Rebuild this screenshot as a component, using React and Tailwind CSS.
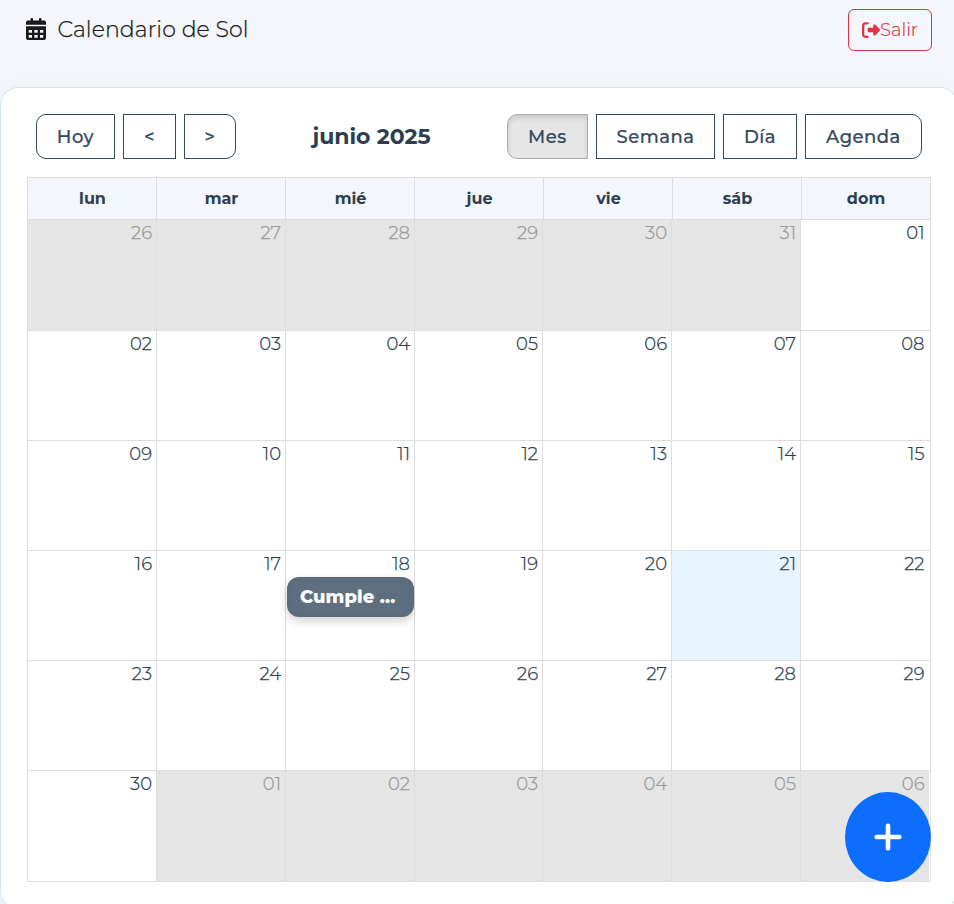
import React from "react";
import { FaRightFromBracket } from "react-icons/fa6";

const days = ["lun", "mar", "mié", "jue", "vie", "sáb", "dom"];

const weeks = [
  ["26", "27", "28", "29", "30", "31", "01"],
  ["02", "03", "04", "05", "06", "07", "08"],
  ["09", "10", "11", "12", "13", "14", "15"],
  ["16", "17", "18", "19", "20", "21", "22"],
  ["23", "24", "25", "26", "27", "28", "29"],
  ["30", "01", "02", "03", "04", "05", "06"],
];

const isOutside = (w, d) => (w === 0 && d < 6) || (w === 5 && d > 0);
const isToday = (w, d) => w === 3 && d === 5;

function CalendarIcon() {
  return (
    <svg className="h-[22px] w-5 shrink-0" viewBox="0 0 20 22" fill="currentColor">
      <path d="M4.6 1a1.2 1.2 0 0 1 2.4 0v1.6h6V1a1.2 1.2 0 0 1 2.4 0v1.6H18a2 2 0 0 1 2 2v2.2H0V4.6a2 2 0 0 1 2-2h2.6z" />
      <path
        fillRule="evenodd"
        d="M0 8.3h20V20a2 2 0 0 1-2 2H2a2 2 0 0 1-2-2zM2.7 11.9v2.9H6v-2.9zM8.3 11.9v2.9h3.4v-2.9zM14 11.9v2.9h3.3v-2.9zM2.7 16.9v2.8H6v-2.8zM8.3 16.9v2.8h3.4v-2.8zM14 16.9v2.8h3.3v-2.8z"
      />
    </svg>
  );
}

function ToolButton({ className, children }) {
  return (
    <button
      className={
        "flex h-[45px] items-center justify-center border pt-px text-[18px] font-medium tracking-[0.5px] text-[#34495e] [-webkit-text-stroke:0.2px] " +
        className
      }
    >
      {children}
    </button>
  );
}

function Cell({ week, day, label }) {
  const outside = isOutside(week, day);
  const bg = outside ? "bg-[#e5e5e5]" : isToday(week, day) ? "bg-[#e8f5ff]" : "bg-white";
  return (
    <div
      className={
        "min-w-0 border-[#dddddd] " +
        (day < 6 ? "border-r " : outside ? "mr-px " : "") +
        (week < 5 ? "border-b " : "") +
        bg
      }
    >
      <div
        className={
          "h-[26px] text-right text-[18px] leading-[26px] font-light [-webkit-text-stroke:0.25px] " +
          (day === 6 ? (outside ? "pr-[4.5px] " : "pr-[5.5px] ") : "pr-1 ") +
          (outside ? "text-[#999999]" : "text-[#2c3e50]")
        }
      >
        {label}
      </div>
      {week === 3 && day === 2 && (
        <div className="ml-px flex h-10 w-[127px] items-center rounded-xl bg-[#5f6f80] pl-[13px] text-[18px] font-extrabold tracking-[0.1px] text-white shadow-[0_4px_10px_rgba(0,0,0,0.18),inset_0_0_8px_rgba(52,73,94,0.2)]">
          Cumple ...
        </div>
      )}
    </div>
  );
}

export default function App() {
  return (
    <div className="relative flex h-[904px] w-[954px] flex-col overflow-hidden bg-[#f4f6fb] font-[Montserrat,Inter,sans-serif]">
      <header className="flex h-[87px] shrink-0 items-start justify-between pt-[9px] pr-[22px] pl-[26px]">
        <div className="flex h-10 items-center text-[#1a1a1a]">
          <CalendarIcon />
          <h1 className="ml-[11.5px] text-[22px] font-light tracking-[0.1px] whitespace-nowrap [-webkit-text-stroke:0.25px]">
            Calendario de Sol
          </h1>
        </div>
        <button className="flex h-[42px] w-[84px] items-center justify-center rounded-md border border-[#dc3545] text-[18px] font-light text-[#dc3545] [-webkit-text-stroke:0.2px]">
          <FaRightFromBracket className="h-[18px] w-[18px] shrink-0" />
          Salir
        </button>
      </header>

      <main className="h-[822px] w-[958px] shrink-0 rounded-[18px] border border-[#cfe6f3] bg-white pt-[26px] pl-[26px] shadow-[0_4px_24px_rgba(0,0,0,0.04)]">
        <div className="flex w-[904px] items-center justify-between pr-[9px] pl-[9px]">
          <div className="flex gap-2">
            <ToolButton className="w-[79px] rounded-l-[10px] border-[#34495e]">Hoy</ToolButton>
            <ToolButton className="w-[53px] border-[#34495e]">&lt;</ToolButton>
            <ToolButton className="w-[52px] rounded-r-[10px] border-[#34495e]">&gt;</ToolButton>
          </div>
          <h2 className="text-[22px] font-bold whitespace-nowrap text-[#2c3e50]">junio 2025</h2>
          <div className="flex gap-2">
            <ToolButton className="w-[81px] rounded-l-[10px] border-[#adadad] bg-[#e6e6e6] shadow-[inset_0_3px_5px_rgba(0,0,0,0.125)]">
              Mes
            </ToolButton>
            <ToolButton className="w-[119px] border-[#34495e]">Semana</ToolButton>
            <ToolButton className="w-[74px] border-[#34495e]">Día</ToolButton>
            <ToolButton className="w-[117px] rounded-r-[10px] border-[#34495e]">Agenda</ToolButton>
          </div>
        </div>

        <div className="mt-[18px] h-[705px] w-[904px] border border-[#dddddd]">
          <div className="grid h-[42px] grid-cols-[129px_129px_129px_129px_129px_129px_128px] border-b border-[#dddddd] bg-[#f4f6fb]">
            {days.map((d, i) => (
              <div
                key={d}
                className={
                  "flex items-center justify-center border-[#dddddd] text-[16px] font-bold text-[#2c3e50] " +
                  (i < 6 ? "border-r pl-px" : "")
                }
              >
                {d}
              </div>
            ))}
          </div>
          <div className="grid grid-cols-[129px_129px_129px_128px_129px_129px_129px] grid-rows-[111px_110px_110px_110px_110px_110px]">
            {weeks.map((week, w) =>
              week.map((label, d) => <Cell key={w + "-" + d} week={w} day={d} label={label} />)
            )}
          </div>
        </div>
      </main>

      <button
        aria-label="+"
        className="absolute top-[792px] left-[845px] flex h-[90px] w-[86px] items-center justify-center rounded-[50%] bg-[#0d6efd] text-white"
      >
        <svg className="h-7 w-7" viewBox="0 0 28 28" stroke="currentColor" strokeWidth="4.6" strokeLinecap="round">
          <path d="M14 2.7v22.6M2.7 14h22.6" />
        </svg>
      </button>
    </div>
  );
}
